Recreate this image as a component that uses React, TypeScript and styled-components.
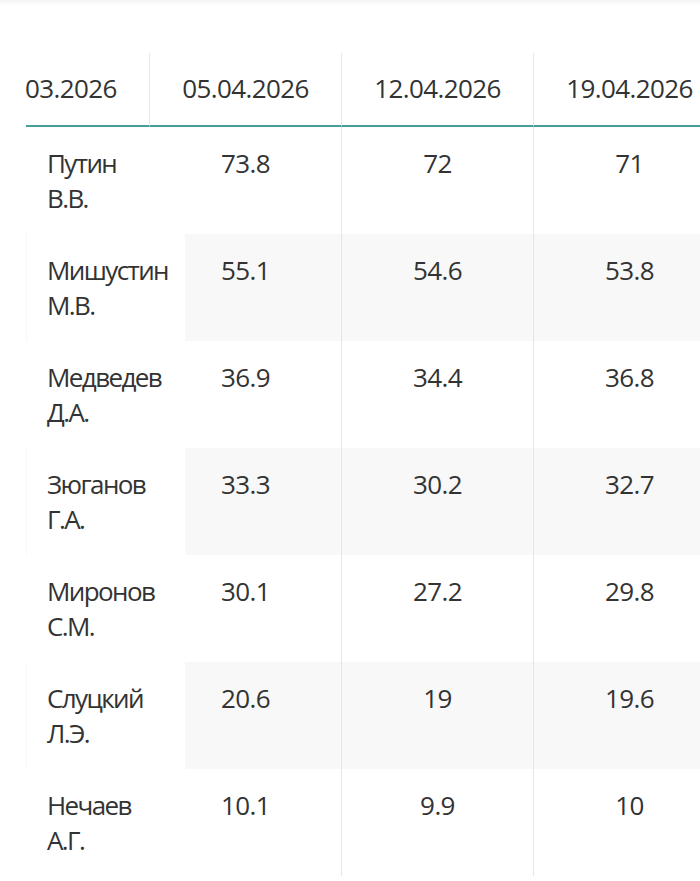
import React, { useLayoutEffect, useRef } from 'react';
import styled, { createGlobalStyle } from 'styled-components';

const GlobalStyle = createGlobalStyle`
  html, body {
    margin: 0;
    padding: 0;
    background: #fff;
  }
  body {
    font-family: "Open Sans", "Noto Sans", sans-serif;
    color: #333;
  }
`;

// недели опроса
const DATES = ['22.03.2026', '29.03.2026', '05.04.2026', '12.04.2026', '19.04.2026'];

const ROWS: { surname: string; initials: string; values: (number | string)[] }[] = [
  { surname: 'Путин', initials: 'В.В.', values: [74.1, 73.5, 73.8, 72, 71] },
  { surname: 'Мишустин', initials: 'М.В.', values: [55.8, 55.3, 55.1, 54.6, 53.8] },
  { surname: 'Медведев', initials: 'Д.А.', values: [35.7, 36.2, 36.9, 34.4, 36.8] },
  { surname: 'Зюганов', initials: 'Г.А.', values: [32.9, 32.4, 33.3, 30.2, 32.7] },
  { surname: 'Миронов', initials: 'С.М.', values: [29.4, 29.9, 30.1, 27.2, 29.8] },
  { surname: 'Слуцкий', initials: 'Л.Э.', values: [20.1, 19.8, 20.6, 19, 19.6] },
  { surname: 'Нечаев', initials: 'А.Г.', values: [9.8, 10.3, 10.1, 9.9, 10] },
];

const NAME_COL = 159;
const DATE_COL = 192;
// сколько прокручено вправо (видна часть колонки 29.03)
const SCROLL_LEFT = NAME_COL + DATE_COL * 2 - 124;

export default function App() {
  const scrollRef = useRef<HTMLDivElement>(null);

  useLayoutEffect(() => {
    if (scrollRef.current) scrollRef.current.scrollLeft = SCROLL_LEFT;
  }, []);

  return (
    <>
      <GlobalStyle />
      <Page>
        <TopEdge />
        <Section>
          <ScrollBox ref={scrollRef}>
            <Table style={{ width: NAME_COL + DATE_COL * DATES.length }}>
              <colgroup>
                <col style={{ width: NAME_COL }} />
                {DATES.map((d) => (
                  <col key={d} style={{ width: DATE_COL }} />
                ))}
              </colgroup>
              <thead>
                <tr>
                  <HeadCell />
                  {DATES.map((d) => (
                    <HeadCell key={d} $divider>
                      {d}
                    </HeadCell>
                  ))}
                </tr>
              </thead>
              <tbody>
                {ROWS.map((row, i) => (
                  <Row key={row.surname} $shaded={i % 2 === 1}>
                    <NameCell $shaded={i % 2 === 1}>
                      <NameLine>{row.surname}</NameLine>
                      <NameLine>{row.initials}</NameLine>
                    </NameCell>
                    {row.values.map((v, j) => (
                      <ValueCell key={DATES[j]}>{v}</ValueCell>
                    ))}
                  </Row>
                ))}
              </tbody>
            </Table>
          </ScrollBox>
        </Section>
      </Page>
    </>
  );
}

const Page = styled.div`
  min-height: 881px;
  background: #fff;
`;

const TopEdge = styled.div`
  height: 5px;
  background: linear-gradient(#f3f3f3, #ffffff);
`;

const Section = styled.section`
  padding: 48px 0 0 26px;
`;

const ScrollBox = styled.div`
  overflow-x: auto;
  scrollbar-width: none;

  &::-webkit-scrollbar {
    display: none;
  }
`;

const Table = styled.table`
  table-layout: fixed;
  border-collapse: separate;
  border-spacing: 0;
  font-size: 26px;
  line-height: 35px;
  letter-spacing: -0.6px;
`;

const HeadCell = styled.th<{ $divider?: boolean }>`
  padding: 18px 0 19px;
  font-weight: 400;
  text-align: center;
  white-space: nowrap;
  border-bottom: 2px solid #479d98;
  border-right: ${(p) => (p.$divider ? '1px solid #e6e6e6' : 'none')};
`;

const Row = styled.tr<{ $shaded: boolean }>`
  background: ${(p) => (p.$shaded ? '#f8f8f8' : '#fff')};
`;

const NameCell = styled.td<{ $shaded: boolean }>`
  position: sticky;
  left: 0;
  z-index: 1;
  padding: 19px 8px 18px 21px;
  vertical-align: top;
  text-align: left;
  letter-spacing: -1.6px;
  background: #fff;
  box-shadow: ${(p) => (p.$shaded ? 'inset 1px 0 0 #f7f7f7' : 'none')};
`;

const NameLine = styled.span`
  display: block;
  white-space: nowrap;
`;

const ValueCell = styled.td`
  padding: 19px 0 18px;
  vertical-align: top;
  text-align: center;
  border-right: 1px solid #e6e6e6;
`;
